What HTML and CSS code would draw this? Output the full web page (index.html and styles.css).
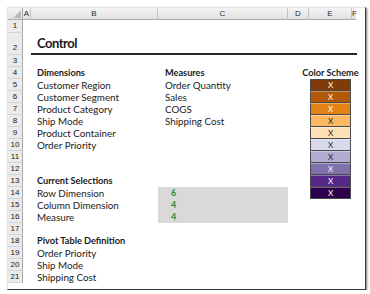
FILE: index.html
```html
<!DOCTYPE html>
<html lang="en">
<head>
    <meta charset="UTF-8">
    <title>Control</title>
    <link rel="stylesheet" href="styles.css">
</head>
<body>
    <div class="frame">
        <div class="colhead">
            <div class="corner"><span class="tri"></span></div>
            <div class="ch">A</div>
            <div class="ch">B</div>
            <div class="ch">C</div>
            <div class="ch">D</div>
            <div class="ch">E</div>
            <div class="ch last">F</div>
        </div>

        <div class="row r1"><div class="rn">1</div></div>
        <div class="row r2"><div class="rn">2</div><div class="title">Control</div></div>
        <div class="row"><div class="rn">3</div></div>
        <div class="row">
            <div class="rn">4</div>
            <div class="b bold">Dimensions</div>
            <div class="c bold">Measures</div>
            <div class="e head bold"><span>Color Scheme</span></div>
        </div>
        <div class="row">
            <div class="rn">5</div>
            <div class="b">Customer Region</div>
            <div class="c">Order Quantity</div>
            <div class="e"><div class="sw sw1">X</div></div>
        </div>
        <div class="row">
            <div class="rn">6</div>
            <div class="b">Customer Segment</div>
            <div class="c">Sales</div>
            <div class="e"><div class="sw sw2">X</div></div>
        </div>
        <div class="row">
            <div class="rn">7</div>
            <div class="b">Product Category</div>
            <div class="c">COGS</div>
            <div class="e"><div class="sw sw3">X</div></div>
        </div>
        <div class="row">
            <div class="rn">8</div>
            <div class="b">Ship Mode</div>
            <div class="c">Shipping Cost</div>
            <div class="e"><div class="sw sw4">X</div></div>
        </div>
        <div class="row">
            <div class="rn">9</div>
            <div class="b">Product Container</div>
            <div class="e"><div class="sw sw5">X</div></div>
        </div>
        <div class="row">
            <div class="rn">10</div>
            <div class="b">Order Priority</div>
            <div class="e"><div class="sw sw6">X</div></div>
        </div>
        <div class="row">
            <div class="rn">11</div>
            <div class="e"><div class="sw sw7">X</div></div>
        </div>
        <div class="row">
            <div class="rn">12</div>
            <div class="e"><div class="sw sw8">X</div></div>
        </div>
        <div class="row">
            <div class="rn">13</div>
            <div class="b bold">Current Selections</div>
            <div class="e"><div class="sw sw9">X</div></div>
        </div>
        <div class="row">
            <div class="rn">14</div>
            <div class="b">Row Dimension</div>
            <div class="c sel">6</div>
            <div class="e"><div class="sw sw10">X</div></div>
        </div>
        <div class="row">
            <div class="rn">15</div>
            <div class="b">Column Dimension</div>
            <div class="c sel">4</div>
        </div>
        <div class="row">
            <div class="rn">16</div>
            <div class="b">Measure</div>
            <div class="c sel">4</div>
        </div>
        <div class="row"><div class="rn">17</div></div>
        <div class="row">
            <div class="rn">18</div>
            <div class="b bold">Pivot Table Definition</div>
        </div>
        <div class="row">
            <div class="rn">19</div>
            <div class="b">Order Priority</div>
        </div>
        <div class="row">
            <div class="rn">20</div>
            <div class="b">Ship Mode</div>
        </div>
        <div class="row">
            <div class="rn">21</div>
            <div class="b">Shipping Cost</div>
        </div>
    </div>
</body>
</html>
```

FILE: styles.css
```css
* {
    box-sizing: border-box;
    margin: 0;
    padding: 0;
}

body {
    background: #ffffff;
    font-family: 'Lato', 'Liberation Sans', sans-serif;
    font-size: 9.8px;
    color: #1a1a1a;
}

.frame {
    margin: 7px 0 0 7px;
    width: 359px;
    height: 283px;
    background: white;
    border-left: 1px solid #e4e4e4;
    border-top: 1px solid #e4e4e4;
    border-right: 1px solid #3a3a3a;
    border-bottom: 1px solid #3a3a3a;
    box-shadow: 1px 1px 2px rgba(0,0,0,0.55);
}

.colhead,
.row {
    display: grid;
    grid-template-columns: 15px 8px 127px 130px 21px 43px 4px;
    grid-template-rows: 100%;
}

.colhead {
    height: 12px;
}

.corner,
.ch {
    background: linear-gradient(#f4f4f4, #e2e2e2);
    border-right: 1px solid #c4c4c4;
    border-bottom: 1px solid #a9a9a9;
    color: #2b2b2b;
    font-family: 'Liberation Sans', sans-serif;
    font-size: 8px;
    line-height: 11px;
    text-align: center;
}

.ch.last {
    border-right: none;
}

.corner {
    position: relative;
    border-right-color: #a9a9a9;
}

.tri {
    position: absolute;
    right: 1px;
    bottom: 1px;
    width: 0;
    height: 0;
    border-left: 8px solid transparent;
    border-bottom: 8px solid #b9b9b9;
}

.row {
    height: 12px;
    line-height: 12px;
}

.row.r1 {
    height: 13px;
}

.row.r2 {
    height: 22px;
}

.rn {
    grid-column: 1;
    background: #ebebeb;
    border-right: 1px solid #a9a9a9;
    border-bottom: 1px solid #d4d4d4;
    color: #222;
    font-family: 'Liberation Sans', sans-serif;
    font-size: 8px;
    text-align: center;
}

.r2 .rn {
    padding-top: 9px;
}

.title {
    grid-column: 3 / 8;
    margin-right: -1px;
    padding-left: 6px;
    font-size: 13px;
    letter-spacing: -0.5px;
    font-weight: 700;
    line-height: 20px;
    border-bottom: 2px solid #262626;
}

.b {
    grid-column: 3;
    padding-left: 6px;
    white-space: nowrap;
}

.c {
    grid-column: 4;
    padding-left: 7px;
    white-space: nowrap;
}

.e {
    grid-column: 6;
}

.bold {
    font-weight: 700;
    font-size: 9.2px;
}

.head {
    display: flex;
    justify-content: center;
    white-space: nowrap;
}

.sel {
    background: #d9d9d9;
    color: #2e8b3a;
    padding-left: 13px;
    font-weight: 700;
    font-size: 9px;
}

.sw {
    margin-left: 1px;
    width: 41px;
    height: 12px;
    line-height: 11px;
    text-align: center;
    font-size: 8px;
    border: 1px solid #4a4a4a;
    border-top-color: rgba(255,255,255,0.35);
    color: white;
}

.sw1 { background: #7f3b08; border-top-color: #4a4a4a; }
.sw2 { background: #b35806; }
.sw3 { background: #e08214; }
.sw4 { background: #fdb863; color: #222; }
.sw5 { background: #fee0b6; color: #222; }
.sw6 { background: #d8daeb; color: #222; }
.sw7 { background: #b2abd2; color: #222; }
.sw8 { background: #8073ac; }
.sw9 { background: #542788; }
.sw10 { background: #2d004b; }
```
